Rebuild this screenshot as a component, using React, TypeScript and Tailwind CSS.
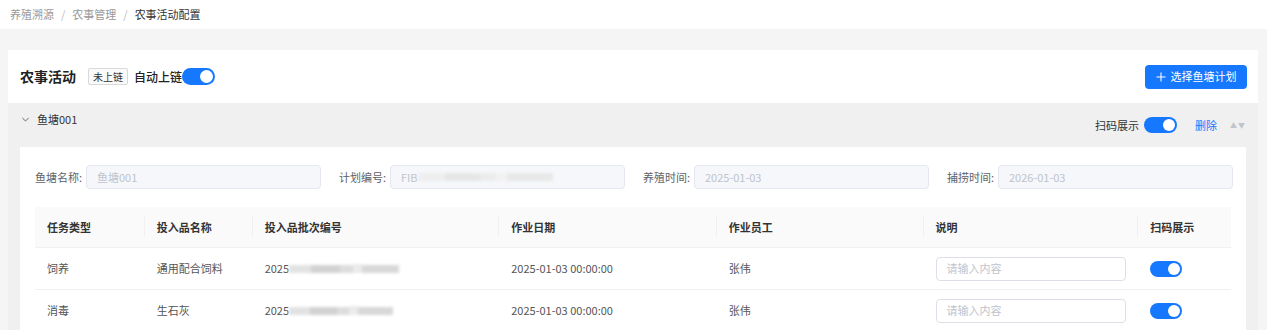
import React from "react";

const Toggle = ({ w = 33, h = 17 }: { w?: number; h?: number }) => (
  <div
    className="relative rounded-full bg-[#1677ff] shrink-0"
    style={{ width: w, height: h }}
  >
    <div
      className="absolute top-[2px] rounded-full bg-white"
      style={{ width: h - 4, height: h - 4, right: 2 }}
    />
  </div>
);

const Blur = ({ w, light }: { w: number; light?: boolean }) => (
  <div className="flex items-center h-[10px] blur-[1.6px]" style={{ width: w }}>
    <div className={`h-[8px] w-[20%] ${light ? "bg-[#eeeeee]" : "bg-[#e2e2e2]"}`} />
    <div className={`h-[8px] w-[26%] ${light ? "bg-[#e6e6e6]" : "bg-[#d2d2d2]"}`} />
    <div className={`h-[8px] w-[12%] ${light ? "bg-[#ececec]" : "bg-[#dddddd]"}`} />
    <div className={`h-[9px] w-[8%] ${light ? "bg-[#f2f2f2]" : "bg-[#ebebeb]"}`} />
    <div className={`h-[8px] w-[34%] ${light ? "bg-[#e8e8e8]" : "bg-[#d8d8d8]"}`} />
  </div>
);

const cols = [110, 108, 247, 218, 207, 215, 93];
const headers = ["任务类型", "投入品名称", "投入品批次编号", "作业日期", "作业员工", "说明", "扫码展示"];

const rows = [
  { type: "饲养", name: "通用配合饲料", date: "2025-01-03 00:00:00", staff: "张伟", bw: 110 },
  { type: "消毒", name: "生石灰", date: "2025-01-03 00:00:00", staff: "张伟", bw: 104 },
];

const FormItem = ({ label, children }: { label: string; children: React.ReactNode }) => (
  <div className="flex items-center">
    <div className="w-[51px] text-[11px] text-[#606266] whitespace-nowrap">{label}</div>
    <div className="flex h-[24px] w-[235px] items-center rounded-[4px] border border-[#e4e7ed] bg-[#f5f7fa] px-[10px] text-[11px] text-[#c0c4cc]">
      {children}
    </div>
  </div>
);

export default function App() {
  return (
    <div className="min-h-[330px] bg-[#f5f5f5] font-['Noto_Sans_CJK_SC',sans-serif] text-[#333]">
      <div className="flex h-[29px] items-center bg-white px-[10px] text-[11px]">
        <span className="text-[#999]">养殖溯源</span>
        <span className="mx-[7px] text-[#bbb]">/</span>
        <span className="text-[#999]">农事管理</span>
        <span className="mx-[7px] text-[#bbb]">/</span>
        <span className="text-[#333]">农事活动配置</span>
      </div>

      <div className="pl-[8px] pr-[9px] pt-[21px]">
        <div className="bg-white">
          <div className="flex h-[53px] items-center justify-between pl-[12px] pr-[11px]">
            <div className="flex items-center">
              <span className="text-[14px] font-bold text-[#222]">农事活动</span>
              <span className="ml-[12px] flex h-[17px] items-center rounded-[2px] border border-[#d9d9d9] bg-[#fafafa] px-[4px] text-[10px] text-[#333]">
                未上链
              </span>
              <span className="ml-[6px] text-[12px] font-medium text-[#222]">自动上链</span>
              <Toggle w={33} h={17} />
            </div>
            <button className="flex h-[24px] w-[102px] items-center justify-center gap-[5px] rounded-[4px] bg-[#1677ff] text-[11px] text-white">
              <svg width="10" height="10" viewBox="0 0 10 10" fill="none">
                <path d="M5 0.5V9.5M0.5 5H9.5" stroke="white" strokeWidth="1.1" />
              </svg>
              选择鱼塘计划
            </button>
          </div>

          <div className="bg-[#f0f0f0]">
            <div className="flex h-[44px] items-center justify-between pl-[13px] pr-[13px]">
              <div className="flex items-center self-start pt-[8px]">
                <svg width="9" height="9" viewBox="0 0 10 10" fill="none" className="mt-[1px]">
                  <path d="M1.5 3.2L5 6.7L8.5 3.2" stroke="#666" strokeWidth="1.1" />
                </svg>
                <span className="ml-[7px] text-[11px] text-[#333]">鱼塘001</span>
              </div>
              <div className="flex items-center">
                <span className="mr-[5px] text-[11px] text-[#333]">扫码展示</span>
                <Toggle w={33} h={16} />
                <span className="ml-[18px] text-[11px] text-[#1677ff]">删除</span>
                <span className="ml-[13px] flex items-center gap-[1px] text-[7px] text-[#c0c4cc]">
                  <span>▲</span>
                  <span>▼</span>
                </span>
              </div>
            </div>

            <div className="mx-[12px] bg-white px-[15px] pt-[18px]">
              <div className="flex gap-[18px]">
                <FormItem label="鱼塘名称:">鱼塘001</FormItem>
                <FormItem label="计划编号:">
                  <span>FIB</span>
                  <Blur w={135} light />
                </FormItem>
                <FormItem label="养殖时间:">2025-01-03</FormItem>
                <FormItem label="捕捞时间:">2026-01-03</FormItem>
              </div>

              <div className="mt-[18px]">
                <div className="flex h-[40px] bg-[#fafafa]">
                  {headers.map((h, i) => (
                    <div
                      key={h}
                      className="relative flex items-center pl-[12px] text-[11px] font-bold text-[#333]"
                      style={{ width: cols[i] }}
                    >
                      {h}
                      {i < headers.length - 1 && (
                        <div className="absolute right-0 top-[10px] h-[20px] w-px bg-[#f0f0f0]" />
                      )}
                    </div>
                  ))}
                </div>
                {rows.map((r) => (
                  <div key={r.type} className="flex h-[42px] border-t border-[#f0f0f0] text-[11px] text-[#555]">
                    <div className="flex items-center pl-[12px]" style={{ width: cols[0] }}>{r.type}</div>
                    <div className="flex items-center pl-[12px]" style={{ width: cols[1] }}>{r.name}</div>
                    <div className="flex items-center pl-[12px]" style={{ width: cols[2] }}>
                      <span>2025</span>
                      <Blur w={r.bw} />
                    </div>
                    <div className="flex items-center pl-[12px]" style={{ width: cols[3] }}>{r.date}</div>
                    <div className="flex items-center pl-[12px]" style={{ width: cols[4] }}>{r.staff}</div>
                    <div className="flex items-center pl-[12px]" style={{ width: cols[5] }}>
                      <div className="flex h-[24px] w-[190px] items-center rounded-[4px] border border-[#dcdfe6] px-[10px] text-[11px] text-[#c0c4cc]">
                        请输入内容
                      </div>
                    </div>
                    <div className="flex items-center pl-[12px]" style={{ width: cols[6] }}>
                      <Toggle w={32} h={16} />
                    </div>
                  </div>
                ))}
              </div>
            </div>
          </div>
        </div>
      </div>
    </div>
  );
}
